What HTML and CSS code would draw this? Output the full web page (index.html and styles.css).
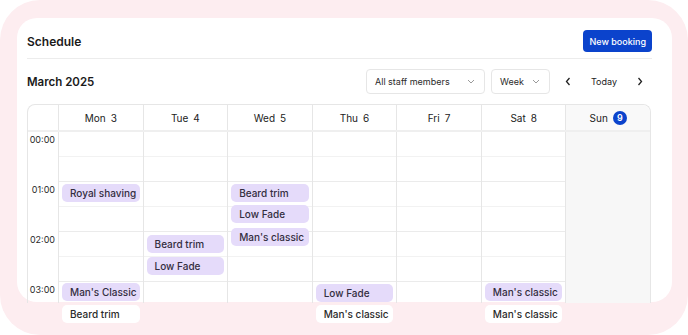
FILE: index.html
```html
<!DOCTYPE html>
<html lang="en">
<head>
    <meta charset="UTF-8">
    <meta name="viewport" content="width=device-width, initial-scale=1.0">
    <title>Schedule</title>
    <link rel="stylesheet" href="styles.css">
</head>
<body>
    <div class="frame">
        <div class="card">
            <div class="card-header">
                <h1>Schedule</h1>
                <button class="primary-btn">New booking</button>
            </div>

            <div class="toolbar">
                <h2>March 2025</h2>
                <div class="controls">
                    <div class="select staff">
                        <span>All staff members</span>
                        <svg width="8" height="5" viewBox="0 0 8 5"><polyline points="1,1 4,4 7,1" fill="none" stroke="#9a9a9a" stroke-width="1"/></svg>
                    </div>
                    <div class="select view">
                        <span>Week</span>
                        <svg width="8" height="5" viewBox="0 0 8 5"><polyline points="1,1 4,4 7,1" fill="none" stroke="#9a9a9a" stroke-width="1"/></svg>
                    </div>
                    <div class="nav">
                        <button class="nav-btn">
                            <svg width="6" height="9" viewBox="0 0 6 9"><polyline points="4.5,1 1.5,4.5 4.5,8" fill="none" stroke="#222" stroke-width="1.3"/></svg>
                        </button>
                        <button class="today-btn">Today</button>
                        <button class="nav-btn">
                            <svg width="6" height="9" viewBox="0 0 6 9"><polyline points="1.5,1 4.5,4.5 1.5,8" fill="none" stroke="#222" stroke-width="1.3"/></svg>
                        </button>
                    </div>
                </div>
            </div>

            <div class="calendar">
                <div class="cal-head">
                    <div class="corner"></div>
                    <div class="day-name"><span>Mon</span><span>3</span></div>
                    <div class="day-name"><span>Tue</span><span>4</span></div>
                    <div class="day-name"><span>Wed</span><span>5</span></div>
                    <div class="day-name"><span>Thu</span><span>6</span></div>
                    <div class="day-name"><span>Fri</span><span>7</span></div>
                    <div class="day-name"><span>Sat</span><span>8</span></div>
                    <div class="day-name today"><span>Sun</span><span class="badge">9</span></div>
                </div>
                <div class="cal-body">
                    <div class="times">
                        <div class="time">00:00</div>
                        <div class="time">01:00</div>
                        <div class="time">02:00</div>
                        <div class="time">03:00</div>
                    </div>
                    <div class="day">
                        <div class="event" style="top: 52px">Royal shaving</div>
                        <div class="event" style="top: 151px">Man's Classic</div>
                        <div class="event plain" style="top: 173px">Beard trim</div>
                    </div>
                    <div class="day">
                        <div class="event" style="top: 103px">Beard trim</div>
                        <div class="event" style="top: 125px">Low Fade</div>
                    </div>
                    <div class="day">
                        <div class="event" style="top: 52px">Beard trim</div>
                        <div class="event" style="top: 73px">Low Fade</div>
                        <div class="event" style="top: 96px">Man's classic</div>
                    </div>
                    <div class="day">
                        <div class="event" style="top: 152px">Low Fade</div>
                        <div class="event plain" style="top: 173px">Man's classic</div>
                    </div>
                    <div class="day"></div>
                    <div class="day">
                        <div class="event" style="top: 151px">Man's classic</div>
                        <div class="event plain" style="top: 173px">Man's classic</div>
                    </div>
                    <div class="day weekend"></div>
                </div>
            </div>
        </div>
    </div>
</body>
</html>
```

FILE: styles.css
```css
* {
    box-sizing: border-box;
}
body {
    margin: 0;
    background-color: #ffffff;
    font-family: Inter, "Noto Sans", sans-serif;
    color: #1c1c1c;
}
.frame {
    width: 688px;
    height: 335px;
    background-color: #fdedf0;
    border-radius: 40px;
    padding: 18px 16px 0 17px;
}
.card {
    background-color: #ffffff;
    border-radius: 20px;
    height: 284px;
    padding: 0 20px 0 10px;
}
.card-header {
    display: flex;
    justify-content: space-between;
    align-items: center;
    padding: 12px 0 6px;
    border-bottom: 1px solid #ececec;
}
h1, h2 {
    margin: 0;
    font-size: 12px;
    font-weight: 600;
    color: #1a1a1a;
}
h2 {
    font-size: 11.5px;
}
.primary-btn {
    background-color: #0b43cc;
    color: #ffffff;
    border: none;
    border-radius: 4px;
    height: 22px;
    padding: 0 6px;
    font-family: inherit;
    font-size: 9px;
    font-weight: 500;
}
.toolbar {
    display: flex;
    justify-content: space-between;
    align-items: center;
    margin: 10px 0;
}
.controls {
    display: flex;
    align-items: center;
    gap: 6px;
}
.select {
    height: 25px;
    border: 1px solid #e6e6e6;
    border-radius: 4px;
    display: flex;
    align-items: center;
    justify-content: space-between;
    padding: 0 9px 0 8px;
    font-size: 9px;
    color: #2a2a2a;
}
.staff {
    width: 119px;
}
.view {
    width: 59px;
}
.nav {
    display: flex;
    align-items: center;
    margin-left: 2px;
    margin-right: 2px;
}
.nav-btn, .today-btn {
    background: none;
    border: none;
    padding: 0;
    height: 25px;
    font-family: inherit;
    font-size: 9px;
    color: #222;
    display: flex;
    align-items: center;
    justify-content: center;
}
.nav-btn {
    width: 20px;
}
.today-btn {
    width: 52px;
}
.calendar {
    border: 1px solid #e6e6e6;
    border-bottom: none;
    border-radius: 8px 8px 0 0;
    margin-right: 1px;
}
.cal-head {
    display: grid;
    grid-template-columns: 30px repeat(7, 1fr);
    height: 27px;
    border-bottom: 2px solid #efefef;
}
.day-name {
    display: flex;
    align-items: center;
    justify-content: center;
    gap: 5px;
    font-size: 10px;
    color: #222;
    border-left: 1px solid #e6e6e6;
}
.day-name.today {
    background-color: #f9f9f9;
    border-top-right-radius: 8px;
}
.badge {
    width: 14px;
    height: 14px;
    border-radius: 50%;
    background-color: #0b43cc;
    color: #ffffff;
    font-size: 9px;
    font-weight: 600;
    display: flex;
    align-items: center;
    justify-content: center;
}
.cal-body {
    display: grid;
    grid-template-columns: 30px repeat(7, 1fr);
    grid-template-rows: 171px;
}
.times {
    overflow: hidden;
}
.time {
    height: 50px;
    text-align: right;
    padding: 2px 3px 0 0;
    font-size: 9px;
    color: #2a2a2a;
}
.day {
    position: relative;
    border-left: 1px solid #e6e6e6;
    background-image: repeating-linear-gradient(to bottom,
        transparent 0, transparent 24px,
        #f2f2f2 24px, #f2f2f2 25px,
        transparent 25px, transparent 49px,
        #ebebeb 49px, #ebebeb 50px);
}
.day.weekend {
    background-image: none;
    background-color: #f7f7f7;
}
.event {
    position: absolute;
    left: 3px;
    right: 3px;
    height: 18px;
    line-height: 18px;
    padding: 0 8px;
    border-radius: 5px;
    background-color: #e5dbfa;
    color: #332d40;
    font-size: 10px;
    font-weight: 500;
    white-space: nowrap;
}
.event.plain {
    background-color: #ffffff;
    color: #2a2a2a;
}
```
